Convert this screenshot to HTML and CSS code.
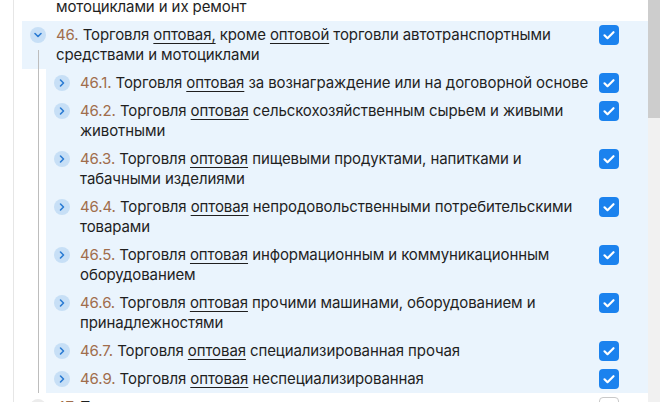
FILE: index.html
```html
<!DOCTYPE html>
<html lang="ru">
<head>
  <meta charset="UTF-8" />
  <meta name="viewport" content="width=device-width, initial-scale=1.0" />
  <title>ОКВЭД</title>
  <link rel="stylesheet" href="styles.css">
</head>
<body>
  <div class="page">
    <div class="tree">

      <div class="node">
        <div class="row">
          <span class="toggle toggle-off"><svg viewBox="0 0 16 16"><path d="M6.5 5l3 3-3 3"/></svg></span>
          <span class="label"><span class="code">45.</span> Торговля оптовая и розничная автотранспортными средствами и мотоциклами и их ремонт</span>
          <span class="check"></span>
        </div>
      </div>

      <div class="node open">
        <div class="row">
          <span class="toggle"><svg viewBox="0 0 16 16"><path d="M5 6.5l3 3 3-3"/></svg></span>
          <span class="label"><span class="code">46.</span> Торговля <u>оптовая,</u> кроме <u>оптовой</u> торговли автотранспортными средствами и мотоциклами</span>
          <span class="check on"><svg viewBox="0 0 20 20"><path d="M5.5 10.3l3 2.9 6-6"/></svg></span>
        </div>

        <div class="children">
          <div class="row">
            <span class="toggle"><svg viewBox="0 0 16 16"><path d="M6.5 5l3 3-3 3"/></svg></span>
            <span class="label"><span class="code">46.1.</span> Торговля <u>оптовая</u> за вознаграждение или на договорной основе</span>
            <span class="check on"><svg viewBox="0 0 20 20"><path d="M5.5 10.3l3 2.9 6-6"/></svg></span>
          </div>
          <div class="row">
            <span class="toggle"><svg viewBox="0 0 16 16"><path d="M6.5 5l3 3-3 3"/></svg></span>
            <span class="label"><span class="code">46.2.</span> Торговля <u>оптовая</u> сельскохозяйственным сырьем и живыми животными</span>
            <span class="check on"><svg viewBox="0 0 20 20"><path d="M5.5 10.3l3 2.9 6-6"/></svg></span>
          </div>
          <div class="row">
            <span class="toggle"><svg viewBox="0 0 16 16"><path d="M6.5 5l3 3-3 3"/></svg></span>
            <span class="label"><span class="code">46.3.</span> Торговля <u>оптовая</u> пищевыми продуктами, напитками и табачными изделиями</span>
            <span class="check on"><svg viewBox="0 0 20 20"><path d="M5.5 10.3l3 2.9 6-6"/></svg></span>
          </div>
          <div class="row">
            <span class="toggle"><svg viewBox="0 0 16 16"><path d="M6.5 5l3 3-3 3"/></svg></span>
            <span class="label"><span class="code">46.4.</span> Торговля <u>оптовая</u> непродовольственными потребительскими товарами</span>
            <span class="check on"><svg viewBox="0 0 20 20"><path d="M5.5 10.3l3 2.9 6-6"/></svg></span>
          </div>
          <div class="row">
            <span class="toggle"><svg viewBox="0 0 16 16"><path d="M6.5 5l3 3-3 3"/></svg></span>
            <span class="label"><span class="code">46.5.</span> Торговля <u>оптовая</u> информационным и коммуникационным оборудованием</span>
            <span class="check on"><svg viewBox="0 0 20 20"><path d="M5.5 10.3l3 2.9 6-6"/></svg></span>
          </div>
          <div class="row">
            <span class="toggle"><svg viewBox="0 0 16 16"><path d="M6.5 5l3 3-3 3"/></svg></span>
            <span class="label"><span class="code">46.6.</span> Торговля <u>оптовая</u> прочими машинами, оборудованием и принадлежностями</span>
            <span class="check on"><svg viewBox="0 0 20 20"><path d="M5.5 10.3l3 2.9 6-6"/></svg></span>
          </div>
          <div class="row">
            <span class="toggle"><svg viewBox="0 0 16 16"><path d="M6.5 5l3 3-3 3"/></svg></span>
            <span class="label"><span class="code">46.7.</span> Торговля <u>оптовая</u> специализированная прочая</span>
            <span class="check on"><svg viewBox="0 0 20 20"><path d="M5.5 10.3l3 2.9 6-6"/></svg></span>
          </div>
          <div class="row">
            <span class="toggle"><svg viewBox="0 0 16 16"><path d="M6.5 5l3 3-3 3"/></svg></span>
            <span class="label"><span class="code">46.9.</span> Торговля <u>оптовая</u> неспециализированная</span>
            <span class="check on"><svg viewBox="0 0 20 20"><path d="M5.5 10.3l3 2.9 6-6"/></svg></span>
          </div>
        </div>
      </div>

      <div class="node">
        <div class="row">
          <span class="toggle toggle-off"><svg viewBox="0 0 16 16"><path d="M6.5 5l3 3-3 3"/></svg></span>
          <span class="label"><span class="code">47.</span> Торговля розничная, кроме торговли автотранспортными средствами и мотоциклами</span>
          <span class="check"></span>
        </div>
      </div>

    </div>

    <!-- полоса прокрутки -->
    <div class="scrollbar">
      <div class="thumb"></div>
    </div>
  </div>
</body>
</html>
```

FILE: styles.css
```css
body {
  margin: 0;
  padding: 0;
  background: #fff;
  font-family: Inter, "Noto Sans", sans-serif;
  font-size: 15px;
  letter-spacing: -0.1px;
  color: #1f1f1f;
}

.page {
  display: flex;
  height: 100vh;
  overflow: hidden;
}

.tree {
  flex: 1;
  margin-left: 13px;
  margin-top: -27px; /* список прокручен */
  padding-left: 8px;
  border-left: 1px solid #e6e6e6;
}

.node {
  position: relative;
}

/* линия дерева под раскрытым узлом */
.node.open::before {
  content: "";
  position: absolute;
  left: 16px;
  top: 29px;
  bottom: 0;
  width: 1px;
  background: #bdbdbd;
}

.row {
  display: grid;
  grid-template-columns: 16px 1fr 20px;
  column-gap: 10px;
  align-items: start;
  padding: 4px 29px 4px 8px;
  line-height: 20px;
}

.label {
  margin-right: -4px;
}

.node.open > .row {
  background: #eaf4fd;
}

.children {
  margin-left: 24px;
  background: #eaf4fd;
}

.toggle {
  width: 16px;
  height: 16px;
  margin-top: 2px;
  border-radius: 50%;
  background: #c7dff6;
  display: flex;
}

.toggle svg {
  width: 16px;
  height: 16px;
  fill: none;
  stroke: #2b7bd3;
  stroke-width: 1.6;
  stroke-linecap: round;
  stroke-linejoin: round;
}

.toggle-off {
  background: #ececec;
}

.toggle-off svg {
  stroke: #8a8a8a;
}

.label u {
  text-underline-offset: 3px;
  text-decoration-thickness: 1px;
}

.code {
  color: #a06d4c;
}

.check {
  width: 20px;
  height: 20px;
  box-sizing: border-box;
  border-radius: 4px;
  border: 1px solid #c9c9c9;
  background: #fff;
  display: flex;
}

.check.on {
  border: none;
  background: #1b82ee;
}

.check svg {
  width: 20px;
  height: 20px;
  fill: none;
  stroke: #fff;
  stroke-width: 2.2;
  stroke-linecap: round;
  stroke-linejoin: round;
}

.scrollbar {
  width: 12px;
  background: #f1f1f1;
}

.thumb {
  height: 118px;
  background: #cdcdcd;
}
```
